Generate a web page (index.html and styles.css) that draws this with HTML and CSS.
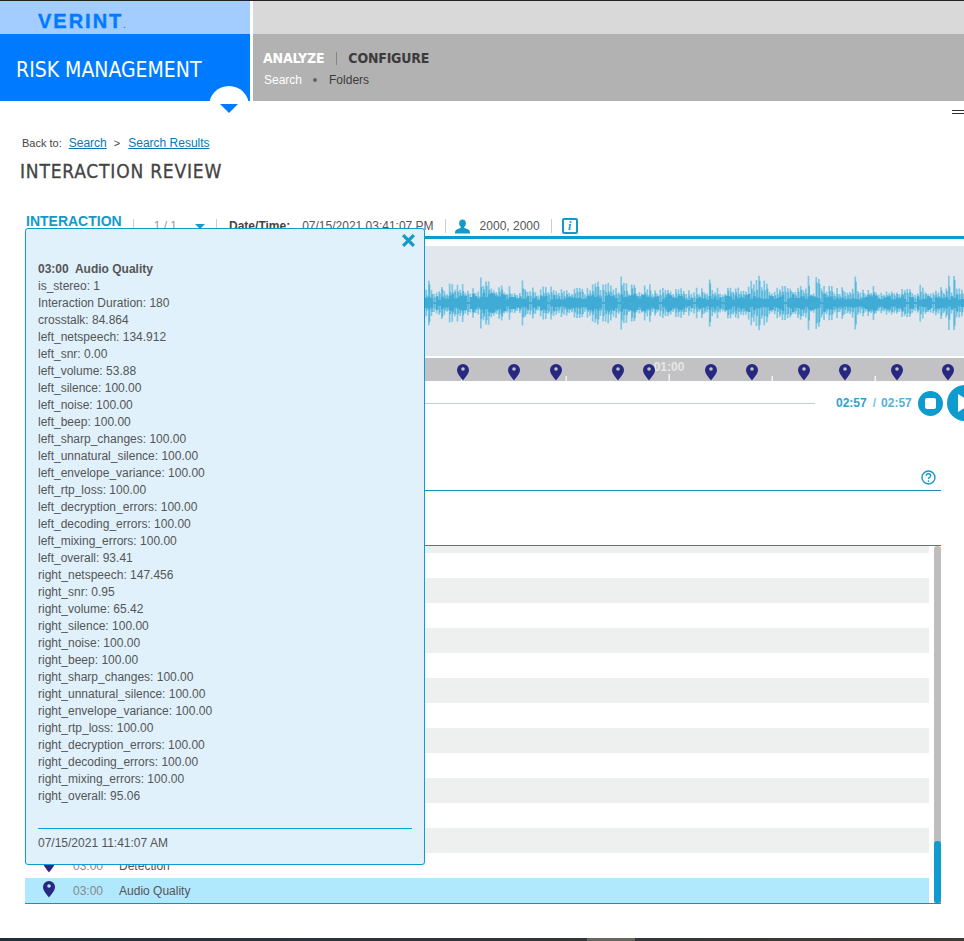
FILE: index.html
```html
<!DOCTYPE html>
<html lang="en">
<head>
<meta charset="utf-8">
<title>Interaction Review</title>
<link rel="stylesheet" href="styles.css">
</head>
<body>
<div class="page">
  <header class="masthead">
    <div class="brand">
      <div class="logo-bar"><span class="logo">VERINT<small>.</small></span></div>
      <div class="product">RISK MANAGEMENT</div>
      <div class="notch"><span class="notch-caret"></span></div>
    </div>
    <div class="nav">
      <div class="nav-top"></div>
      <div class="nav-main">
        <div class="nav-primary"><span class="on">ANALYZE</span><i class="nav-sep"></i><span>CONFIGURE</span></div>
        <div class="nav-secondary"><span class="on">Search</span><i class="nav-dot"></i><span>Folders</span></div>
      </div>
    </div>
  </header>

  <div class="menu-lines"></div>

  <nav class="crumbs"><span>Back to:</span><a href="#">Search</a><span class="gt">&gt;</span><a href="#">Search Results</a></nav>
  <h1 class="title">INTERACTION REVIEW</h1>

  <div class="toolbar">
    <span class="tb-label">INTERACTION</span><i class="tb-sep first"></i>
    <span class="tb-count">1 / 1</span><span class="tb-caret"></span><i class="tb-sep"></i>
    <b class="tb-date-label">Date/Time:</b><span class="tb-date">07/15/2021 03:41:07 PM</span><i class="tb-sep"></i>
    <svg class="tb-person" viewBox="0 0 16 15"><path d="M8 0c2.300 0 3.600 1.700 3.600 3.900 0 1.700-.8 3.100-1.700 3.900v1.300c2 .6 5 1.500 5.800 3.100.2.500.3 1.800.3 2.800H0c0-1 .1-2.300.3-2.800.8-1.600 3.800-2.500 5.800-3.100V7.800C5.200 7 4.400 5.600 4.400 3.900 4.400 1.700 5.700 0 8 0z"/></svg>
    <span class="tb-user">2000, 2000</span><i class="tb-sep"></i>
    <span class="tb-info">i</span>
  </div>

  <div class="wave"><svg id="wave" class="wave-svg" viewBox="0 0 939 110" preserveAspectRatio="none"></svg></div>

  <svg class="timeline" viewBox="0 0 939 23">
    <defs>
      <path id="pin" d="M0 16.500C-1.500 13.800-6 10-6 5.900A6 5.900 0 0 1 6 5.900C6 10 1.500 13.800 0 16.500ZM0 3.200A1.800 1.800 0 1 0 0 6.800A1.800 1.800 0 1 0 0 3.200Z" fill-rule="evenodd"/>
    </defs>
    <g class="ticks">
      <rect x="436" y="21.500" width="1.500" height="1.500"/><rect x="540.500" y="18" width="1.500" height="5"/><rect x="643.500" y="16" width="1.500" height="7"/><rect x="746.500" y="18" width="1.500" height="5"/><rect x="849.500" y="18" width="1.500" height="5"/>
    </g>
    <text class="tl-label" x="644" y="13" text-anchor="middle">01:00</text>
    <g class="pins">
      <use href="#pin" x="438" y="6"/><use href="#pin" x="489" y="6"/><use href="#pin" x="531" y="6"/><use href="#pin" x="593" y="6"/><use href="#pin" x="624" y="6"/><use href="#pin" x="686" y="6"/><use href="#pin" x="727" y="6"/><use href="#pin" x="779" y="6"/><use href="#pin" x="820" y="6"/><use href="#pin" x="872" y="6"/><use href="#pin" x="923" y="6"/>
    </g>
  </svg>

  <div class="player">
    <div class="progress"></div>
    <span class="t-current">02:57</span><span class="t-slash">/</span><span class="t-total">02:57</span>
    <button class="btn-stop" aria-label="Stop"><span></span></button>
    <button class="btn-play" aria-label="Play"><span></span></button>
  </div>

  <div class="tabs-head">
    <svg class="help" viewBox="0 0 15 15"><circle cx="7.500" cy="7.500" r="6.500"/><path d="M5.300 5.800c0-1.300 1-2.100 2.200-2.100s2.200.8 2.200 2c0 1.500-2.200 1.600-2.200 3.200"/><circle class="dot" cx="7.500" cy="11.100" r=".9"/></svg>
  </div>
  <div class="tabs-sub"></div>

  <div class="list-wrap">
    <div class="list">
      <div class="row alt clip"></div>
      <div class="row"></div><div class="row alt"></div>
      <div class="row"></div><div class="row alt"></div>
      <div class="row"></div><div class="row alt"></div>
      <div class="row"></div><div class="row alt"></div>
      <div class="row"></div><div class="row alt"></div>
      <div class="row"></div><div class="row alt"></div>
      <div class="row">
        <svg class="row-pin" viewBox="-6 0 12 17"><use href="#pin"/></svg><span class="row-time">03:00</span><span>Detection</span>
      </div>
      <div class="row selected">
        <svg class="row-pin" viewBox="-6 0 12 17"><use href="#pin"/></svg><span class="row-time">03:00</span><span>Audio Quality</span>
      </div>
    </div>
    <div class="scroll"><div class="scroll-thumb"></div></div>
  </div>

  <footer class="taskbar"><span class="task"></span></footer>

  <aside class="popup">
    <svg class="popup-close" viewBox="0 0 14 14"><path d="M2 2l10 10M12 2L2 12"/></svg>
    <div class="popup-body">
      <p class="popup-head">03:00&nbsp; Audio Quality</p>
      <p>is_stereo: 1</p>
      <p>Interaction Duration: 180</p>
      <p>crosstalk: 84.864</p>
      <p>left_netspeech: 134.912</p>
      <p>left_snr: 0.00</p>
      <p>left_volume: 53.88</p>
      <p>left_silence: 100.00</p>
      <p>left_noise: 100.00</p>
      <p>left_beep: 100.00</p>
      <p>left_sharp_changes: 100.00</p>
      <p>left_unnatural_silence: 100.00</p>
      <p>left_envelope_variance: 100.00</p>
      <p>left_rtp_loss: 100.00</p>
      <p>left_decryption_errors: 100.00</p>
      <p>left_decoding_errors: 100.00</p>
      <p>left_mixing_errors: 100.00</p>
      <p>left_overall: 93.41</p>
      <p>right_netspeech: 147.456</p>
      <p>right_snr: 0.95</p>
      <p>right_volume: 65.42</p>
      <p>right_silence: 100.00</p>
      <p>right_noise: 100.00</p>
      <p>right_beep: 100.00</p>
      <p>right_sharp_changes: 100.00</p>
      <p>right_unnatural_silence: 100.00</p>
      <p>right_envelope_variance: 100.00</p>
      <p>right_rtp_loss: 100.00</p>
      <p>right_decryption_errors: 100.00</p>
      <p>right_decoding_errors: 100.00</p>
      <p>right_mixing_errors: 100.00</p>
      <p>right_overall: 95.06</p>
    </div>
    <div class="popup-foot">07/15/2021 11:41:07 AM</div>
  </aside>
</div>
<script src="waveform.js"></script>
</body>
</html>
```

FILE: styles.css
```css
* { box-sizing: border-box; }
html, body { margin: 0; padding: 0; height: 941px; overflow: hidden; background: #fff; }
body { font-family: "Liberation Sans", Arial, sans-serif; font-size: 12px; color: #555; }

.page { position: relative; width: 964px; height: 941px; overflow: hidden; display: flex; flex-direction: column; }

/* masthead */
.masthead { display: flex; height: 101px; border-top: 1px solid #222; flex: none; }
.brand { position: relative; width: 250px; flex: none; display: flex; flex-direction: column; }
.logo-bar { height: 33px; background: #a3cdff; padding: 10px 0 0 38px; }
.logo { display: block; font: bold 20px/20px "Liberation Sans", sans-serif; letter-spacing: 2px; color: #007bff; -webkit-text-stroke: .4px #007bff; }
.logo small { font-size: 8px; letter-spacing: 0; -webkit-text-stroke: 0; }
.product { flex: 1; background: #007bff; color: #fff; padding: 23px 0 0 16px; font: 21px/26px "DejaVu Sans Condensed", sans-serif; }
.notch { position: absolute; left: 209px; top: 85px; width: 40px; height: 40px; border-radius: 50%; background: #fff; }
.notch-caret { position: absolute; left: 11px; top: 18px; border-style: solid; border-width: 9px 9px 0; border-color: #007bff transparent transparent; }
.nav { flex: 1; margin-left: 3px; display: flex; flex-direction: column; }
.nav-top { height: 33px; background: #d9d9d9; }
.nav-main { flex: 1; background: #b2b2b2; padding: 15px 0 0 10px; color: #3d3a3d; }
.nav-primary { display: flex; align-items: center; font: bold 14px/18px "DejaVu Sans Condensed", sans-serif; letter-spacing: -.2px; }
.nav-sep { width: 1px; height: 13px; background: #858585; margin: 0 11px 0 12px; }
.nav-secondary { display: flex; align-items: center; margin: 6px 0 0 1px; font-size: 12px; line-height: 14px; }
.nav-dot { width: 4px; height: 4px; border-radius: 50%; background: #666; margin: 0 12px 0 11px; }
.on { color: #fff; }

.menu-lines { position: absolute; right: 0; top: 110px; width: 12px; height: 4px; border-top: 1px solid #333; border-bottom: 1px solid #333; }

/* breadcrumb + title */
.crumbs { display: flex; align-items: baseline; margin: 35px 0 0 22px; height: 15px; font-size: 11px; line-height: 15px; color: #444; }
.crumbs a { color: #0b77b0; font-size: 12px; margin-left: 7px; text-decoration: underline; }
.crumbs .gt { margin-left: 7px; margin-right: 1px; }
.title { margin: 8px 0 0 20px; height: 24px; font: 500 19px/24px "DejaVu Sans Condensed", sans-serif; letter-spacing: .8px; color: #444; -webkit-text-stroke: .3px #444; }

/* toolbar */
.toolbar { display: flex; align-items: center; margin: 33px 0 0 26px; height: 23px; border-bottom: 3px solid #0f9bcd; flex: none; white-space: nowrap; color: #555; }
.tb-label { font-weight: bold; font-size: 14px; color: #1499c9; margin-top: -10px; }
.tb-sep { width: 1px; height: 14px; background: #ccc; margin-left: 11px; }
.tb-sep.first { margin-left: 11px; }
.tb-count { margin-left: 20px; color: #999; }
.tb-caret { margin-left: 18px; border-style: solid; border-width: 5px 5px 0; border-color: #1499c9 transparent transparent; }
.tb-date-label { margin-left: 12px; color: #444; }
.tb-date { margin-left: 12px; }
.tb-person { width: 15px; height: 15px; margin-left: 9px; fill: #1499c9; }
.tb-user { margin-left: 10px; }
.tb-info { margin-left: 10px; width: 16px; height: 16px; border: 2px solid #1499c9; border-radius: 2px; color: #1499c9; font: italic bold 12px/12px "Liberation Serif", serif; text-align: center; }

/* waveform */
.wave { margin: 7px 0 0 25px; height: 110px; background: #e2e7ee; flex: none; }
.wave-svg { display: block; width: 939px; height: 110px; }
.wave-edge { fill: #7cc7e3; }
.wave-mid { fill: #58b7db; }
.wave-core { fill: #40acd6; }
.timeline { display: block; margin: 2px 0 0 25px; width: 939px; height: 23px; background: #c2c2c5; flex: none; }
.ticks { fill: #f4f4f4; }
.pins { fill: #262882; }
.tl-label { font: bold 12px "Liberation Sans", sans-serif; fill: #e6e6e6; }

/* player */
.player { display: flex; align-items: center; margin: 3px 0 0 25px; height: 38px; width: 960px; flex: none; }
.progress { width: 790px; height: 1px; background: #c3cfe0; flex: none; }
.t-current, .t-total, .t-slash { font-weight: bold; font-size: 12px; }
.t-current { margin-left: 21px; color: #2f9fd0; }
.t-slash { margin-left: 6px; color: #7fc3e0; }
.t-total { margin-left: 5px; color: #55b2d8; }
.btn-stop, .btn-play { border: 0; padding: 0; border-radius: 50%; background: #0f9bcd; display: flex; align-items: center; flex: none; }
.btn-stop { width: 25px; height: 25px; margin-left: 6px; justify-content: center; }
.btn-stop span { width: 11px; height: 11px; background: #fff; border-radius: 2px; }
.btn-play { width: 36px; height: 36px; margin-left: 4px; padding-left: 11px; }
.btn-play span { border-style: solid; border-width: 9px 0 9px 14px; border-color: transparent transparent transparent #fff; }

/* tabs */
.tabs-head { display: flex; justify-content: flex-end; align-items: flex-start; margin: 47px 23px 0 25px; height: 22px; padding: 1px 5px 0 0; border-bottom: 1px solid #1a8fbf; flex: none; }
.help { width: 15px; height: 15px; fill: none; stroke: #1499c9; stroke-width: 1.400; }
.help .dot { fill: #1499c9; stroke: none; }
.tabs-sub { margin: 0 23px 0 25px; height: 55px; border-bottom: 1px solid #1a8fbf; flex: none; }

/* list */
.list-wrap { display: flex; margin: 0 23px 0 25px; height: 358px; border-bottom: 1px solid #1a8fbf; flex: none; }
.list { width: 904px; flex: none; overflow: hidden; }
.row { height: 25px; display: flex; align-items: center; color: #555; }
.row.clip { height: 7px; }
.row.alt { background: #eef0ef; }
.row.selected { background: #b0e8fd; }
.row-pin { width: 12px; height: 17px; margin: -2px 0 0 18px; fill: #262882; }
.row-time { margin: 0 16px 0 18px; color: #888; }
.scroll { position: relative; width: 7px; margin-left: 5px; background: #bebebe; border-radius: 3px 3px 0 0; }
.scroll-thumb { position: absolute; left: 0; right: 0; bottom: 0; height: 62px; border-radius: 3px; background: #0f9bcd; }

/* taskbar */
.taskbar { position: absolute; left: 0; right: 0; bottom: 0; height: 3px; background: linear-gradient(90deg, #20303b, #3e3a35); }
.task { position: absolute; left: 587px; width: 48px; top: 0; bottom: 0; background: #66665f; }

/* popup */
.popup { position: absolute; left: 25px; top: 228px; width: 400px; height: 637px; background: #e0f1fc; border: 1px solid #0f9bcd; border-radius: 3px; padding: 32px 12px 0; color: #555; }
.popup-close { position: absolute; right: 8px; top: 4px; width: 15px; height: 15px; fill: none; stroke: #1499c9; stroke-width: 3; }
.popup-body p { margin: 0; line-height: 17px; white-space: nowrap; }
.popup-body .popup-head { font-weight: bold; }
.popup-foot { margin-top: 23px; border-top: 1px solid #0aa5d8; padding-top: 6px; line-height: 17px; }
```

FILE: waveform.js
```js
(function () {
  var svg = document.getElementById('wave');
  var seed = 2024;
  function rnd() {
    seed = (seed * 1664525 + 1013904223) % 4294967296;
    return seed / 4294967296;
  }
  var mid = 57, edge = '', midLayer = '', core = '';
  function bar(x, w, h) {
    return 'M' + x.toFixed(1) + ' ' + (mid - h).toFixed(1) + 'h' + w + 'v' + (2 * h).toFixed(1) + 'h-' + w + 'z';
  }
  var env = 0.8;
  for (var x = 0; x < 939; x += 2.6) {
    env += (rnd() - 0.5) * 0.3;
    env = Math.max(0.65, Math.min(1, env));
    var h = (8 + rnd() * 13) * env + 2;
    if (rnd() < 0.05) h = 22 + rnd() * 6;
    edge += bar(x, 1.7, h);
    midLayer += bar(x + 0.6, 1.7, h * (0.55 + rnd() * 0.3));
    var c = Math.max(3, (4 + rnd() * 7) * env);
    if (rnd() < 0.04) c = 1;
    core += bar(x, 2.6, c);
  }
  var NS = 'http://www.w3.org/2000/svg';
  [[edge, 'wave-edge'], [midLayer, 'wave-mid'], [core, 'wave-core']].forEach(function (p) {
    var el = document.createElementNS(NS, 'path');
    el.setAttribute('d', p[0]);
    el.setAttribute('class', p[1]);
    svg.appendChild(el);
  });
})();
```
